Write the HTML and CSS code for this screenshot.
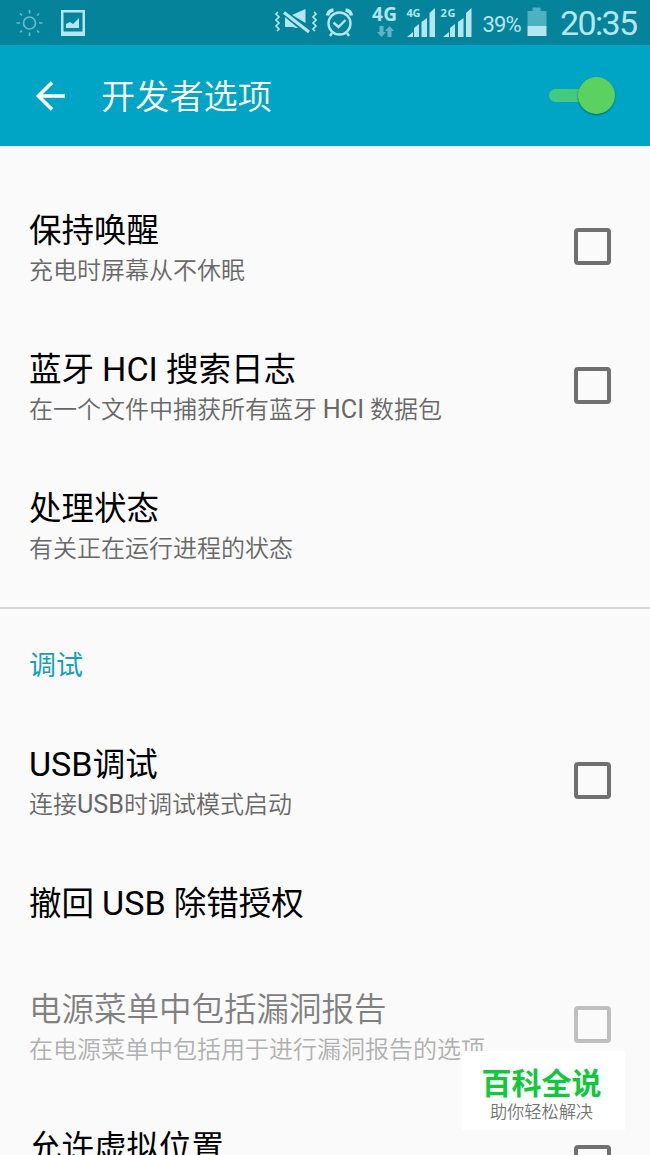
FILE: index.html
```html
<!DOCTYPE html>
<html lang="zh-CN">
<head>
<meta charset="utf-8">
<title>开发者选项</title>
<link rel="stylesheet" href="styles.css">
</head>
<body>
<div class="screen">
  <div class="status">
    <svg class="status-icons" width="650" height="45" viewBox="0 0 650 45" fill="#b5e6ef">
      <g fill="none" stroke="#68bccb" stroke-width="1.700"><circle cx="29.500" cy="23" r="6"/><path d="M29.500 10v3.500M29.500 32.500v3.500M16.500 23h3.500M39 23h3.500M20 13.500l2 2M37 30.500l2 2M39 13.500l-2 2M22 30.500l-2 2"/></g>
      <path fill-rule="evenodd" d="M61 10h24v26H61zM63.500 12.500v19h19v-19z"/><path d="M66 28v-4l4-2 3 2 6-6v10z"/>
      <path d="M292 15l13.500-6v14zM285 17l13 11-5-1h-8z"/>
      <path d="M284 12.500l25 19.500" stroke="#04839b" stroke-width="6"/><path d="M284 12.500l25 19.500" stroke="#b5e6ef" stroke-width="3.200"/>
      <path d="M285 18l13 10-5-1h-8z"/>
      <path fill="none" stroke="#b5e6ef" stroke-width="1.700" d="M278 12l-2 2 3 3-3 3 3 3-3 3 3 3-2 2M314 12l2 2-3 3 3 3-3 3 3 3-3 3 2 2"/>
      <g fill="none" stroke="#b5e6ef" stroke-width="2.400"><circle cx="339.500" cy="23.500" r="11"/><path d="M333.500 22.500l5 4.500 7-7M332 33l-2 3M347 33l2 3"/><path stroke-width="3.600" d="M327.500 15.500q1-5 6-5.500M351.500 15.500q-1-5-6-5.500"/></g>
      <path fill="#62b4c4" d="M379.500 26h4v6h2.500l-4.500 5-4.500-5h2.500zM387.500 37h4v-6h2.500l-4.500-5-4.500 5h2.500z"/>
      <path d="M407 37l6-5v5zM414 28l5-4v13h-5zM421.500 22l5.500-4v19h-5.500zM429.500 13l5.500-5v29h-5.500zM443 37l6-5v5zM450 28l5-4v13h-5zM458 22l5.500-4v19H458zM466 13l5.500-5v29H466z"/>
      <path fill="#4fb0c0" d="M527.500 11h5V7.500h8V11h6v15h-19z"/><path d="M527.500 26h19v10h-19z"/>
      <g class="status-text"><text class="net" x="372" y="21" textLength="25">4G</text><text class="sim" x="406.500" y="17" textLength="14">4G</text><text class="sim" x="440.500" y="17" textLength="15">2G</text><text class="percent" x="482.500" y="31.500" textLength="39">39%</text><text class="clock" x="560" y="34.500" textLength="78">20:35</text></g>
    </svg>
  </div>
  <header class="appbar">
    <svg class="back" width="32" height="32" viewBox="0 0 32 32" fill="none" stroke="#fff" stroke-width="3.600"><path d="M17 2.500L3.500 16 17 29.500M4 16h26"/></svg>
    <h1 class="heading">开发者选项</h1>
    <div class="switch"><div class="track"></div><div class="thumb"></div></div>
  </header>
  <main class="list">
    <div class="row"><div class="label"><div class="title">保持唤醒</div><div class="summary">充电时屏幕从不休眠</div></div><div class="check"></div></div>
    <div class="row"><div class="label"><div class="title">蓝牙 <span class="latin">HCI</span> 搜索日志</div><div class="summary">在一个文件中捕获所有蓝牙 <span class="latin">HCI</span> 数据包</div></div><div class="check"></div></div>
    <div class="row"><div class="label"><div class="title">处理状态</div><div class="summary">有关正在运行进程的状态</div></div></div>
    <div class="section">调试</div>
    <div class="row"><div class="label"><div class="title"><span class="latin">USB</span>调试</div><div class="summary">连接<span class="latin">USB</span>时调试模式启动</div></div><div class="check"></div></div>
    <div class="row single"><div class="label"><div class="title">撤回 <span class="latin">USB</span> 除错授权</div></div></div>
    <div class="row disabled"><div class="label"><div class="title">电源菜单中包括漏洞报告</div><div class="summary">在电源菜单中包括用于进行漏洞报告的选项</div></div><div class="check"></div></div>
    <div class="row"><div class="label"><div class="title">允许虚拟位置</div><div class="summary">&nbsp;</div></div><div class="check"></div></div>
  </main>
  <div class="badge"><div class="brand">百科全说</div><div class="slogan">助你轻松解决</div></div>
</div>
</body>
</html>
```
FILE: styles.css
```css
* { box-sizing: border-box; }
body { margin: 0; font-family: Roboto, "Noto Sans CJK SC", sans-serif; }
.screen { position: relative; width: 650px; height: 1155px; overflow: hidden; background: #fafafa; }
.status { height: 45px; background: #04839b; }
.status-icons { display: block; }
.net { font: 700 19px "Open Sans", sans-serif; }
.sim { font: 700 11px "Open Sans", sans-serif; }
.percent { font: 400 22px Roboto, sans-serif; }
.clock { font: 400 34px Roboto, sans-serif; }
.appbar { display: flex; align-items: center; height: 101px; padding: 0 34px 0 35px; background: #00a5c6; }
.heading { flex: 1; margin: 0 0 0 34px; padding-top: 3px; font-size: 34.2px; font-weight: 350; line-height: 48px; color: #fff; }
.switch { display: flex; align-items: center; width: 67px; }
.track { width: 40px; height: 13px; margin-right: -11px; border-radius: 7px; background: #43ca80; }
.thumb { flex: none; width: 37px; height: 37px; border-radius: 50%; background: #5bd260; box-shadow: 0 1px 2px #08665e; }
.list { padding-top: 30px; }
.row { display: flex; align-items: center; height: 139px; padding: 0 39px 0 29px; }
.label { flex: 1; padding-top: 7px; white-space: nowrap; }
.title { font-size: 32.5px; line-height: 44px; color: #000; }
.summary { font-size: 24px; font-weight: 350; line-height: 36px; color: #686868; }
.latin { font-weight: 400; font-size: 1.05em; line-height: 1; }
.check { width: 37px; height: 37px; margin-top: 1px; border: 4px solid #707070; border-radius: 4px; }
.section { height: 117px; padding-left: 29px; padding-top: 14px; font-size: 27px; line-height: 36px; color: #16a1b8; }
.section::before { content: ""; display: block; height: 2px; margin: 0 0 39px -29px; background: #d8d8d8; }
.single { height: 105px; }
.single .label { padding-top: 4px; }
.disabled .label { padding-top: 9px; }
.disabled .title { color: #808080; font-weight: 350; }
.disabled .summary { color: #b0b0b0; }
.disabled .check { border-color: #bebebe; }
.badge { position: absolute; left: 462px; top: 1051px; width: 163px; height: 79px; padding: 14px 4px 0 0; background: #fff; text-align: center; white-space: nowrap; }
.brand { font-size: 30px; font-weight: 700; line-height: 37px; color: #10c83c; }
.slogan { font-size: 17.2px; font-weight: 350; line-height: 20px; color: #757575; }
```
